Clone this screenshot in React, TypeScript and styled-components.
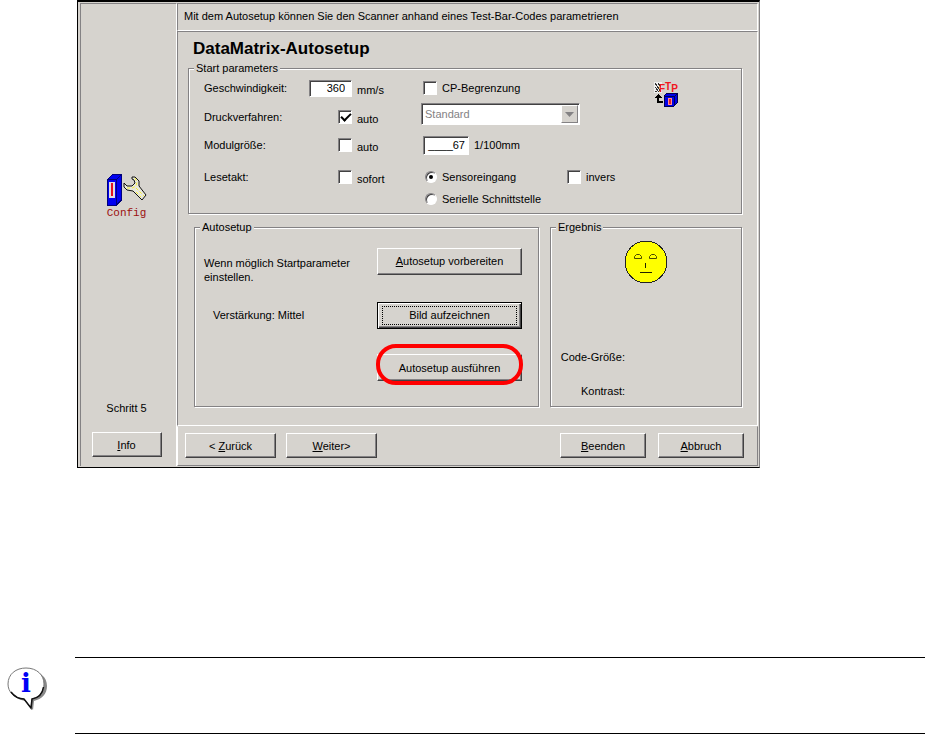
import React from "react";
import styled, { createGlobalStyle, css } from "styled-components";

const face = "#d6d3ce";
const shade = "#848284";
const dark = "#424142";

const GlobalStyle = createGlobalStyle`
  * { box-sizing: border-box; }
  body {
    margin: 0;
    background: #fff;
    color: #000;
    font: 11px/14px "Liberation Sans", Arial, sans-serif;
  }
`;

const sunken = css`
  border: 1px solid;
  border-color: ${shade} #fff #fff ${shade};
`;

const Dialog = styled.main`
  display: grid;
  grid-template-columns: 97px 1fr;
  max-width: 683px;
  margin-left: 77px;
  padding: 1px 1px 1px 2px;
  background: ${face};
  border: 1px solid #000;
  border-top-width: 2px;
  border-right-color: ${shade};
`;

const Sidebar = styled.aside`
  ${sunken}
  border-bottom: 0;
  display: flex;
  flex-direction: column;
  align-items: center;
  padding: 170px 4px 9px 0;
`;

const ConfigCaption = styled.div`
  color: #9c1010;
  font: 11px/12px "Liberation Mono", monospace;
`;

const Step = styled.div`
  margin-top: auto;
  margin-bottom: 17px;
`;

const Main = styled.div`
  display: flex;
  flex-direction: column;
  min-width: 0;
`;

const Hint = styled.header`
  ${sunken}
  padding: 5px 6px 7px;
`;

const Body = styled.section`
  ${sunken}
  padding: 7px 15px 18px 10px;
`;

const Title = styled.h1`
  margin: 0 0 2px 5px;
  font-size: 17px;
  line-height: 20px;
  font-weight: bold;
`;

const Group = styled.fieldset`
  min-width: 0;
  margin: 0;
  padding: 0;
  border: 1px solid ${shade};
  box-shadow: 1px 1px 0 #fff, inset 1px 1px 0 #fff;
`;

const Legend = styled.legend`
  margin-left: 5px;
  padding: 0 2px;
  background: ${face};
`;

const Parameters = styled.div`
  display: flex;
  padding: 0 15px 4px;
  margin-top: -2px;
`;

const Rows = styled.div`
  flex: 0 1 450px;
`;

const Row = styled.div<{ $height: number; $space?: number }>`
  display: grid;
  grid-template-columns: 105px 43px 71px 144px 1fr;
  align-items: center;
  height: ${(p) => p.$height}px;
  margin-top: ${(p) => p.$space ?? 0}px;
`;

const Trailing = styled.div`
  grid-column: 2;
  display: flex;
  justify-content: flex-end;
`;

const UnitLabel = styled.label`
  padding: 3px 0 0 5px;
`;

const Option = styled.div`
  grid-column-start: 4;
  display: flex;
  align-items: center;
  gap: 5px;
  white-space: nowrap;
`;

const LastOption = styled(Option)`
  grid-column-start: 5;
`;

const Field = styled.input<{ $pad: number }>`
  width: ${(p) => (p.$pad > 4 ? 43 : 46)}px;
  height: ${(p) => (p.$pad > 4 ? 17 : 19)}px;
  padding: 0 ${(p) => p.$pad}px 0 0;
  border: 1px solid;
  border-color: ${shade} #fff #fff ${shade};
  box-shadow: inset 1px 1px 0 ${dark};
  border-radius: 0;
  background: #fff;
  font: inherit;
  text-align: right;
`;

const Check = styled.input`
  appearance: none;
  flex: none;
  display: grid;
  place-items: center;
  width: 14px;
  height: 14px;
  margin: 0;
  background: #fff;
  ${sunken}
  box-shadow: inset 1px 1px 0 ${dark};
  &:checked::after {
    content: "";
    width: 8px;
    height: 4px;
    margin: 0 0 2px 1px;
    border: solid #000;
    border-width: 0 0 2px 2px;
    transform: rotate(-45deg);
  }
`;

const Radio = styled.input`
  appearance: none;
  flex: none;
  display: grid;
  place-items: center;
  width: 12px;
  height: 12px;
  margin: 0 0 0 2px;
  border-radius: 50%;
  background: #fff;
  ${sunken}
  box-shadow: inset 1px 1px 0 ${dark};
  &:checked::after {
    content: "";
    width: 4px;
    height: 4px;
    border-radius: 50%;
    background: #000;
  }
`;

const SelectBox = styled.div`
  grid-column: 4 / 6;
  align-self: start;
  display: grid;
  width: 159px;
  height: 22px;
  margin-left: -2px;
  ${sunken}
  box-shadow: inset 1px 1px 0 ${dark};
  background: #fff;
`;

const Select = styled.select`
  grid-area: 1 / 1;
  appearance: none;
  width: 100%;
  padding: 0 3px;
  border: 0;
  background: transparent;
  color: ${shade};
  opacity: 1;
  font: inherit;
`;

const DropArrow = styled.span`
  grid-area: 1 / 1;
  justify-self: end;
  display: grid;
  place-items: center;
  width: 17px;
  margin: 1px;
  background: ${face};
  border: 1px solid;
  border-color: #fff ${shade} ${shade} #fff;
  pointer-events: none;
`;

const FtpIcon = styled.svg`
  margin-top: 9px;
`;

const Panels = styled.div`
  display: grid;
  grid-template-columns: 345fr 192fr;
  gap: 11px;
  margin: 6px 0 0 6px;
`;

const Actions = styled.div`
  display: grid;
  grid-template-columns: 1fr 145px;
  grid-template-rows: 30px 28px 27px;
  row-gap: 25px;
  align-items: center;
  padding: 12px 16px 25px 9px;
`;

const Note = styled.p`
  margin: 17px 0 0;
`;

const Gain = styled.div`
  padding-left: 9px;
`;

const Button = styled.button<{ $width?: number; $default?: boolean }>`
  display: grid;
  place-items: center;
  width: ${(p) => (p.$width ? `${p.$width}px` : "100%")};
  height: ${(p) => (p.$width ? 25 : 27)}px;
  padding: 0;
  border: 1px solid;
  border-color: #fff ${dark} ${dark} #fff;
  border-radius: 0;
  box-shadow: inset -1px -1px 0 ${shade};
  background: ${face};
  color: #000;
  font: inherit;
  white-space: nowrap;
  ${(p) =>
    p.$default &&
    css`
      padding: 2px;
      border-color: #000;
      box-shadow: inset 1px 1px 0 #fff, inset -1px -1px 0 ${dark}, inset -2px -2px 0 ${shade};
    `}
`;

const FocusFrame = styled.span`
  display: grid;
  place-items: center;
  align-self: stretch;
  justify-self: stretch;
  margin: 1px 2px;
  border: 1px dotted #000;
`;

const Highlighted = styled.div`
  position: relative;
  grid-column: 2;
  &::after {
    content: "";
    position: absolute;
    inset: -10px -1px -4px;
    border: 4px solid #f00;
    border-radius: 20px;
    pointer-events: none;
  }
`;

const Result = styled.div`
  display: flex;
  flex-direction: column;
  align-items: center;
  height: 100%;
  padding: 6px 0 8px;
`;

const Results = styled.dl`
  align-self: flex-start;
  width: 74px;
  margin: auto 0 0;
  text-align: right;
`;

const ResultName = styled.dt`
  margin-top: 20px;
  white-space: nowrap;
`;

const Footer = styled.footer`
  display: flex;
  gap: 10px;
  padding: 6px 13px 7px 7px;
  border: 1px solid;
  border-color: ${face} ${shade} ${shade} #fff;
`;

const Closing = styled.div`
  display: flex;
  gap: 12px;
  margin-left: auto;
`;

const Notice = styled.section`
  display: flex;
  margin-top: 189px;
  padding-left: 7px;
`;

const NoticeText = styled.div`
  flex: 1;
  height: 77px;
  margin-left: 27px;
  border: solid #000;
  border-width: 1px 0;
`;

const BalloonIcon = styled.svg`
  flex: none;
  margin-top: 10px;
`;

function ConfigGraphic() {
  return (
    <svg width="40" height="33" viewBox="0 0 40 33" aria-hidden="true">
      <g shapeRendering="crispEdges">
        <path d="M.5 5.500 5.500.5H14.500V26L9 31.500H.5Z" fill="#0000f0" stroke="#00007b" />
        <path d="M9.500 31V5.500L14.500.5M.5 5.500H9" fill="none" stroke="#00007b" />
        <rect x="2" y="8" width="6" height="16" fill="#dedbde" />
        <rect x="4" y="9" width="2" height="13" fill="#e01020" />
      </g>
      <path
        d="M25 3H28L32 7V12L39 21 35 26 26 17 20 16 17 13V9L20 12H25L28 9 27 6 25 5Z"
        fill="#e8e8dc"
        stroke="#111"
        strokeWidth="1"
      />
      <path d="M28 4l2 4-1 4-4 2-5 0M29 14l8 8M29 18l5 5" fill="none" stroke="#f5ee30" strokeDasharray="3 2" />
    </svg>
  );
}

function FtpGraphic() {
  return (
    <FtpIcon width="26" height="25" viewBox="0 0 26 25" aria-label="FTP">
      <g shapeRendering="crispEdges">
        <rect width="8" height="11" fill="#efefef" />
        <path d="M1 1l6 9M1 5l4 5M4 1l3 4M1 9h2" stroke="#333" strokeWidth="1" />
        <path d="M0 16l4-4 4 4H5v3h4v2H3v-5Z" fill="#000" />
        <path d="M10 14l3-3h10v10l-3 3H10Z" fill="#0000e8" stroke="#000052" />
        <path d="M10 14.500h10V23M20.500 14.500l3-3" fill="none" stroke="#000052" />
        <rect x="14" y="16" width="4" height="7" fill="#ff8c94" />
        <rect x="15" y="17" width="2" height="5" fill="#e0202c" />
      </g>
      <text y="9" fill="#f01820" fontFamily="Liberation Sans, sans-serif" fontSize="10" fontWeight="bold">
        <tspan x="5" y="10">F</tspan>
        <tspan y="8">T</tspan>
        <tspan y="10">P</tspan>
      </text>
    </FtpIcon>
  );
}

function FaceGraphic() {
  return (
    <svg width="44" height="44" viewBox="0 0 44 44" aria-hidden="true">
      <circle cx="22" cy="22" r="21" fill="#ff0" stroke="#222" shapeRendering="crispEdges" />
      <g fill="none" stroke="#4a4900">
        <path d="M10.500 18.500v-2l2-2h3l2 2v2ZM25.500 18.500v-2l2-2h3l2 2v2Z" />
        <path d="M21.500 23v5M16 32.500h12" stroke="#222200" />
      </g>
    </svg>
  );
}

function BalloonGraphic() {
  return (
    <BalloonIcon width="41" height="44" viewBox="0 0 41 44" aria-hidden="true">
      <path d="M22 4c11 0 18 6 18 15 0 8-5 13-13 15l-1 9-8-9C8 32 4 27 4 19 4 10 12 4 22 4Z" fill="#888" />
      <path
        d="M19 1c11 0 18 7 18 16 0 8-5 13-12 15l-1 9-7-9C7 31 1 25 1 17 1 7 9 1 19 1Z"
        fill="#fff"
        stroke="#777"
      />
      <path d="M36.500 20c-1 7-5 11-11.500 12l-1 9-7-9C12 32 7 29 4 25" fill="none" stroke="#111" strokeWidth="1.500" />
      <text
        x="19"
        y="25"
        textAnchor="middle"
        fill="#0000f5"
        fontFamily="DejaVu Serif, serif"
        fontWeight="bold"
        fontSize="26"
      >
        i
      </text>
    </BalloonIcon>
  );
}

export default function App() {
  return (
    <>
      <GlobalStyle />
      <Dialog>
        <Sidebar>
          <ConfigGraphic />
          <ConfigCaption>Config</ConfigCaption>
          <Step>Schritt 5</Step>
          <Button type="button" $width={70}>
            <span><u>I</u>nfo</span>
          </Button>
        </Sidebar>
        <Main>
          <Hint>Mit dem Autosetup können Sie den Scanner anhand eines Test-Bar-Codes parametrieren</Hint>
          <Body>
            <Title>DataMatrix-Autosetup</Title>
            <Group>
              <Legend>Start parameters</Legend>
              <Parameters>
                <Rows>
                  <Row $height={30}>
                    <label htmlFor="speed">Geschwindigkeit:</label>
                    <Field id="speed" $pad={6} defaultValue="360" />
                    <UnitLabel htmlFor="speed">mm/s</UnitLabel>
                    <Option>
                      <Check type="checkbox" id="cp" />
                      <label htmlFor="cp">CP-Begrenzung</label>
                    </Option>
                  </Row>
                  <Row $height={28}>
                    <label htmlFor="method">Druckverfahren:</label>
                    <Trailing>
                      <Check type="checkbox" id="method-auto" defaultChecked />
                    </Trailing>
                    <UnitLabel htmlFor="method-auto">auto</UnitLabel>
                    <SelectBox>
                      <Select id="method" disabled>
                        <option>Standard</option>
                      </Select>
                      <DropArrow>
                        <svg width="9" height="5" viewBox="0 0 9 5" aria-hidden="true">
                          <path d="M0 0h9L4.500 5Z" fill={shade} />
                        </svg>
                      </DropArrow>
                    </SelectBox>
                  </Row>
                  <Row $height={28}>
                    <label htmlFor="module">Modulgröße:</label>
                    <Trailing>
                      <Check type="checkbox" id="module-auto" />
                    </Trailing>
                    <UnitLabel htmlFor="module-auto">auto</UnitLabel>
                    <Option>
                      <Field id="module" $pad={3} defaultValue="____67" />
                      <label htmlFor="module">1/100mm</label>
                    </Option>
                  </Row>
                  <Row $height={22} $space={7}>
                    <span>Lesetakt:</span>
                    <Trailing>
                      <Check type="checkbox" id="instant" />
                    </Trailing>
                    <UnitLabel htmlFor="instant">sofort</UnitLabel>
                    <Option>
                      <Radio type="radio" name="trigger" id="sensor" defaultChecked />
                      <label htmlFor="sensor">Sensoreingang</label>
                    </Option>
                    <LastOption>
                      <Check type="checkbox" id="inverse" />
                      <label htmlFor="inverse">invers</label>
                    </LastOption>
                  </Row>
                  <Row $height={21}>
                    <Option>
                      <Radio type="radio" name="trigger" id="serial" />
                      <label htmlFor="serial">Serielle Schnittstelle</label>
                    </Option>
                  </Row>
                </Rows>
                <FtpGraphic />
              </Parameters>
            </Group>
            <Panels>
              <Group>
                <Legend>Autosetup</Legend>
                <Actions>
                  <Note>Wenn möglich Startparameter einstellen.</Note>
                  <Button type="button">
                    <span><u>A</u>utosetup vorbereiten</span>
                  </Button>
                  <Gain>Verstärkung: Mittel</Gain>
                  <Button type="button" $default>
                    <FocusFrame>Bild aufzeichnen</FocusFrame>
                  </Button>
                  <Highlighted>
                    <Button type="button">Autosetup ausführen</Button>
                  </Highlighted>
                </Actions>
              </Group>
              <Group>
                <Legend>Ergebnis</Legend>
                <Result>
                  <FaceGraphic />
                  <Results>
                    <ResultName>Code-Größe:</ResultName>
                    <ResultName>Kontrast:</ResultName>
                  </Results>
                </Result>
              </Group>
            </Panels>
          </Body>
          <Footer>
            <Button type="button" $width={91}>
              <span>&lt; <u>Z</u>urück</span>
            </Button>
            <Button type="button" $width={91}>
              <span><u>W</u>eiter&gt;</span>
            </Button>
            <Closing>
              <Button type="button" $width={86}>
                <span><u>B</u>eenden</span>
              </Button>
              <Button type="button" $width={86}>
                <span><u>A</u>bbruch</span>
              </Button>
            </Closing>
          </Footer>
        </Main>
      </Dialog>
      <Notice>
        <BalloonGraphic />
        <NoticeText />
      </Notice>
    </>
  );
}
